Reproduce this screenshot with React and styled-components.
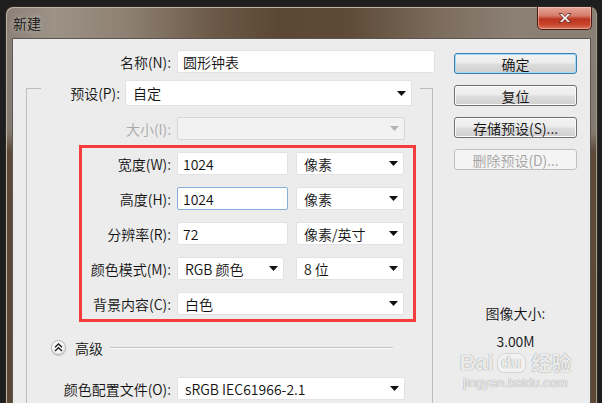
import styled, { createGlobalStyle } from "styled-components";

const GlobalStyle = createGlobalStyle`
  * {
    box-sizing: border-box;
  }

  body {
    margin: 0;
    background: #1e1e1e;
    font-family: "Noto Sans CJK SC", "Noto Sans", sans-serif;
  }
`;

function Arrow({ disabled }) {
  return (
    <svg width="9" height="5" viewBox="0 0 9 5">
      <path d="M0 0h9L4.5 5z" fill={disabled ? "#b4b4b4" : "#111"} />
    </svg>
  );
}

function Select({ width, value, disabled }) {
  return (
    <SelectBox $width={width} $disabled={disabled}>
      <span>{value}</span>
      <Arrow disabled={disabled} />
    </SelectBox>
  );
}

function FieldRow({ label, labelWidth, children, disabled }) {
  return (
    <Row>
      <Label $width={labelWidth} $disabled={disabled}>
        {label}
      </Label>
      {children}
    </Row>
  );
}

function App() {
  return (
    <Page>
      <GlobalStyle />
      <Window>
        <TitleBar>
          <Title>新建</Title>
          <CloseButton>
            <svg width="16" height="12" viewBox="0 0 16 12">
              <path
                d="M2 1.5h3.2L8 4.6l2.8-3.1H14L9.7 6l4.3 4.5h-3.2L8 7.4l-2.8 3.1H2L6.3 6z"
                fill="#fff"
                stroke="#5a2018"
                strokeWidth="0.8"
              />
            </svg>
          </CloseButton>
        </TitleBar>
        <Client>
          <LeftColumn>
            <FieldRow label="名称(N):" labelWidth={158}>
              <TextField $width={258}>圆形钟表</TextField>
            </FieldRow>

            <GroupBox>
              <GroupHeader>
                <Corner $side="left" />
                <Label $width={79} $gap={5}>
                  预设(P):
                </Label>
                <PresetSelect>
                  <span>自定</span>
                  <Arrow />
                </PresetSelect>
                <HeaderGap />
                <Corner $side="right" />
              </GroupHeader>

              <GroupBody>
                <FieldRow label="大小(I):" labelWidth={144} disabled>
                  <Select width={228} value="" disabled />
                </FieldRow>

                <Highlight>
                  <FieldRow label="宽度(W):" labelWidth={89}>
                    <TextField $width={111}>1024</TextField>
                    <Select width={108} value="像素" />
                  </FieldRow>
                  <FieldRow label="高度(H):" labelWidth={89}>
                    <TextField $width={111} $focused>
                      1024
                    </TextField>
                    <Select width={108} value="像素" />
                  </FieldRow>
                  <FieldRow label="分辨率(R):" labelWidth={89}>
                    <TextField $width={111}>72</TextField>
                    <Select width={108} value="像素/英寸" />
                  </FieldRow>
                  <FieldRow label="颜色模式(M):" labelWidth={89}>
                    <Select width={107} value="RGB 颜色" />
                    <Spacer />
                    <Select width={108} value="8 位" />
                  </FieldRow>
                  <FieldRow label="背景内容(C):" labelWidth={89}>
                    <Select width={227} value="白色" />
                  </FieldRow>
                </Highlight>

                <Advanced>
                  <ExpandButton>
                    <svg width="9" height="9" viewBox="0 0 9 9">
                      <path
                        d="M1 4.2L4.5 1 8 4.2M1 8L4.5 4.8 8 8"
                        fill="none"
                        stroke="#222"
                        strokeWidth="1.5"
                      />
                    </svg>
                  </ExpandButton>
                  <AdvancedText>高级</AdvancedText>
                  <Rule />
                </Advanced>

                <FieldRow label="颜色配置文件(O):" labelWidth={144}>
                  <Select width={228} value="sRGB IEC61966-2.1" />
                </FieldRow>
              </GroupBody>
            </GroupBox>
          </LeftColumn>

          <RightColumn>
            <Button $variant="default">确定</Button>
            <Button>复位</Button>
            <Button>存储预设(S)...</Button>
            <Button $variant="disabled">删除预设(D)...</Button>

            <ImageSize>
              <div>图像大小:</div>
              <div>3.00M</div>
            </ImageSize>
            <Watermark>
              <Brand>
                Bai<Paw>du</Paw>
                <BrandCn>经验</BrandCn>
              </Brand>
              <BrandUrl>jingyan.baidu.com</BrandUrl>
            </Watermark>
          </RightColumn>
        </Client>
      </Window>
    </Page>
  );
}

const Page = styled.div`
  width: 602px;
  height: 403px;
  overflow: hidden;
  padding: 6px 0 0 5px;
  background: #1e1e1e;
`;

const Window = styled.div`
  width: 593px;
  height: 440px;
  display: flex;
  flex-direction: column;
  border: 1px solid #2e2822;
  border-bottom: none;
  border-radius: 8px 8px 0 0;
  padding: 0 6px;
  box-shadow: inset 1px 1px 0 #b9b0a6, inset -1px 0 0 #a39a90;
  background:
    linear-gradient(
        90deg,
        #8a8076 0%,
        #9c9286 8%,
        #8e8173 20%,
        #6a5745 36%,
        #5b4734 46%,
        #5e4a37 58%,
        #7a6a5a 72%,
        #8c8075 86%,
        #8a7f74 100%
      )
      top / 100% 32px no-repeat,
    linear-gradient(
      180deg,
      #8a8076 0px,
      #857a6f 125px,
      #5c4938 145px,
      #5a4736 100%
    );
`;

const TitleBar = styled.div`
  flex: 0 0 31px;
  display: flex;
  justify-content: space-between;
  align-items: flex-start;
  margin-right: -1px;
`;

const Title = styled.div`
  margin-top: 7px;
  padding-left: 1px;
  font-size: 14px;
  line-height: 18px;
  font-weight: 350;
  color: #141414;
  text-shadow: 0 0 6px rgba(255, 255, 255, 0.55);
`;

const CloseButton = styled.div`
  width: 55px;
  height: 23px;
  display: flex;
  align-items: center;
  justify-content: center;
  border: 1px solid #4d1d14;
  border-top: none;
  border-radius: 0 0 5px 5px;
  background: linear-gradient(180deg, #e6a898 0%, #d67a6a 40%, #bb3520 55%, #c8462c 80%, #df755c 100%);
  box-shadow: inset 0 0 0 1px rgba(255, 220, 210, 0.45);
`;

const Client = styled.div`
  flex: 1 1 auto;
  display: flex;
  align-items: flex-start;
  border: 1px solid #5d5650;
  border-bottom: none;
  background: #ececec;
  font-weight: 350;
`;

const LeftColumn = styled.div`
  width: 427px;
  padding-top: 11px;
  display: flex;
  flex-direction: column;
`;

const Row = styled.div`
  height: 23px;
  display: flex;
  align-items: center;
`;

const Label = styled.div`
  flex: 0 0 auto;
  width: ${(p) => p.$width}px;
  margin-right: ${(p) => p.$gap ?? 6}px;
  text-align: right;
  white-space: nowrap;
  font-size: 14px;
  line-height: 18px;
  color: ${(p) => (p.$disabled ? "#a9a9a9" : "#111")};
`;

const TextField = styled.div`
  flex: 0 0 auto;
  width: ${(p) => p.$width}px;
  height: 23px;
  padding: 0 5px;
  display: flex;
  align-items: center;
  background: #fff;
  border: 1px solid ${(p) => (p.$focused ? "#84aedb" : "#e2e2e2")};
  border-radius: 2px;
  font-size: 14px;
  line-height: 18px;
  color: #111;
`;

const SelectBox = styled.div`
  flex: 0 0 auto;
  width: ${(p) => p.$width}px;
  height: 23px;
  padding: 0 5px 0 7px;
  display: flex;
  align-items: center;
  justify-content: space-between;
  background: ${(p) => (p.$disabled ? "#f2f2f2" : "#fff")};
  border: 1px solid ${(p) => (p.$disabled ? "#d6d6d6" : "#e2e2e2")};
  border-radius: 2px;
  font-size: 14px;
  line-height: 18px;
  color: #111;
  white-space: nowrap;
`;

const PresetSelect = styled(SelectBox).attrs({ $width: 287 })`
  height: 26px;
  align-self: center;
`;

const Spacer = styled.div`
  width: 12px;
`;

const GroupBox = styled.div`
  width: 407px;
  margin: 7px 0 0 13px;
  display: flex;
  flex-direction: column;
`;

const GroupHeader = styled.div`
  height: 26px;
  display: flex;
  align-items: center;
`;

const Corner = styled.div`
  flex: 0 0 auto;
  width: ${(p) => (p.$side === "left" ? 15 : 13)}px;
  align-self: stretch;
  margin-top: 8px;
  border-top: 1px solid #bdbdbd;
  ${(p) => (p.$side === "left" ? "border-left" : "border-right")}: 1px solid #bdbdbd;
`;

const HeaderGap = styled.div`
  width: 8px;
`;

const GroupBody = styled.div`
  display: flex;
  flex-direction: column;
  padding-top: 11px;
  padding-bottom: 40px;
  border-left: 1px solid #bdbdbd;
  border-right: 1px solid #bdbdbd;
`;

const Highlight = styled.div`
  width: 337px;
  margin: 5px 0 0 52px;
  padding: 4px 0;
  display: flex;
  flex-direction: column;
  gap: 12px;
  border: 3px solid #f63c3c;

  & ${Row} > ${TextField} {
    margin-right: 8px;
  }
`;

const Advanced = styled.div`
  height: 15px;
  margin-top: 18px;
  margin-bottom: 22px;
  padding-left: 24px;
  display: flex;
  align-items: center;
`;

const ExpandButton = styled.div`
  width: 15px;
  height: 15px;
  display: flex;
  align-items: center;
  justify-content: center;
  border-radius: 50%;
  border: 1px solid #b5b5b5;
  background: radial-gradient(circle at 40% 35%, #ffffff 0%, #f4f4f4 60%, #dcdcdc 100%);
  box-shadow: 0 1px 1px rgba(0, 0, 0, 0.18);
`;

const AdvancedText = styled.div`
  margin-left: 9px;
  font-size: 14px;
  line-height: 18px;
  color: #111;
`;

const Rule = styled.div`
  width: 283px;
  margin-left: 7px;
  border-top: 1px solid #c4c4c4;
  border-bottom: 1px solid #fbfbfb;
`;

const RightColumn = styled.div`
  width: 123px;
  margin-left: 14px;
  padding-top: 14px;
  display: flex;
  flex-direction: column;
  gap: 11px;
`;

const Button = styled.div`
  height: 21px;
  display: flex;
  align-items: center;
  justify-content: center;
  border-radius: 3px;
  font-size: 14px;
  line-height: 18px;
  color: ${(p) => (p.$variant === "disabled" ? "#a3a3a3" : "#111")};
  border: 1px solid
    ${(p) =>
      p.$variant === "default"
        ? "#3c7fb1"
        : p.$variant === "disabled"
          ? "#bcc0c3"
          : "#707070"};
  background: ${(p) =>
    p.$variant === "disabled"
      ? "#f4f4f4"
      : "linear-gradient(180deg, #f3f3f3 0%, #ebebeb 48%, #dddddd 52%, #cfcfcf 100%)"};
  box-shadow: ${(p) =>
    p.$variant === "default"
      ? "inset 0 0 0 1px #9fdcf9"
      : p.$variant === "disabled"
        ? "none"
        : "inset 0 0 0 1px #fbfbfb"};
`;

const ImageSize = styled.div`
  margin-top: 123px;
  display: flex;
  flex-direction: column;
  align-items: center;
  gap: 10px;
  font-size: 14px;
  line-height: 18px;
  color: #111;
`;

const Watermark = styled.div`
  margin-top: -10px;
  display: flex;
  flex-direction: column;
  align-items: center;
  font-weight: 400;
  color: rgba(255, 255, 255, 0.85);
  text-shadow:
    0 0 1px rgba(0, 0, 0, 0.35),
    0 0 1px rgba(0, 0, 0, 0.2);
`;

const Brand = styled.div`
  display: flex;
  align-items: center;
  font-family: "Liberation Sans", sans-serif;
  font-weight: bold;
  font-size: 22px;
  line-height: 24px;
`;

const Paw = styled.span`
  margin-left: 3px;
  padding: 0 3px;
  font-size: 17px;
  line-height: 18px;
  border-radius: 9px 9px 7px 7px;
  border: 1px solid rgba(0, 0, 0, 0.12);
  background: rgba(255, 255, 255, 0.35);
`;

const BrandCn = styled.span`
  margin-left: 6px;
  font-family: "Noto Sans CJK SC", sans-serif;
  font-size: 20px;
`;

const BrandUrl = styled.div`
  font-family: "Liberation Sans", sans-serif;
  font-size: 13px;
  line-height: 15px;
`;

export default App;
